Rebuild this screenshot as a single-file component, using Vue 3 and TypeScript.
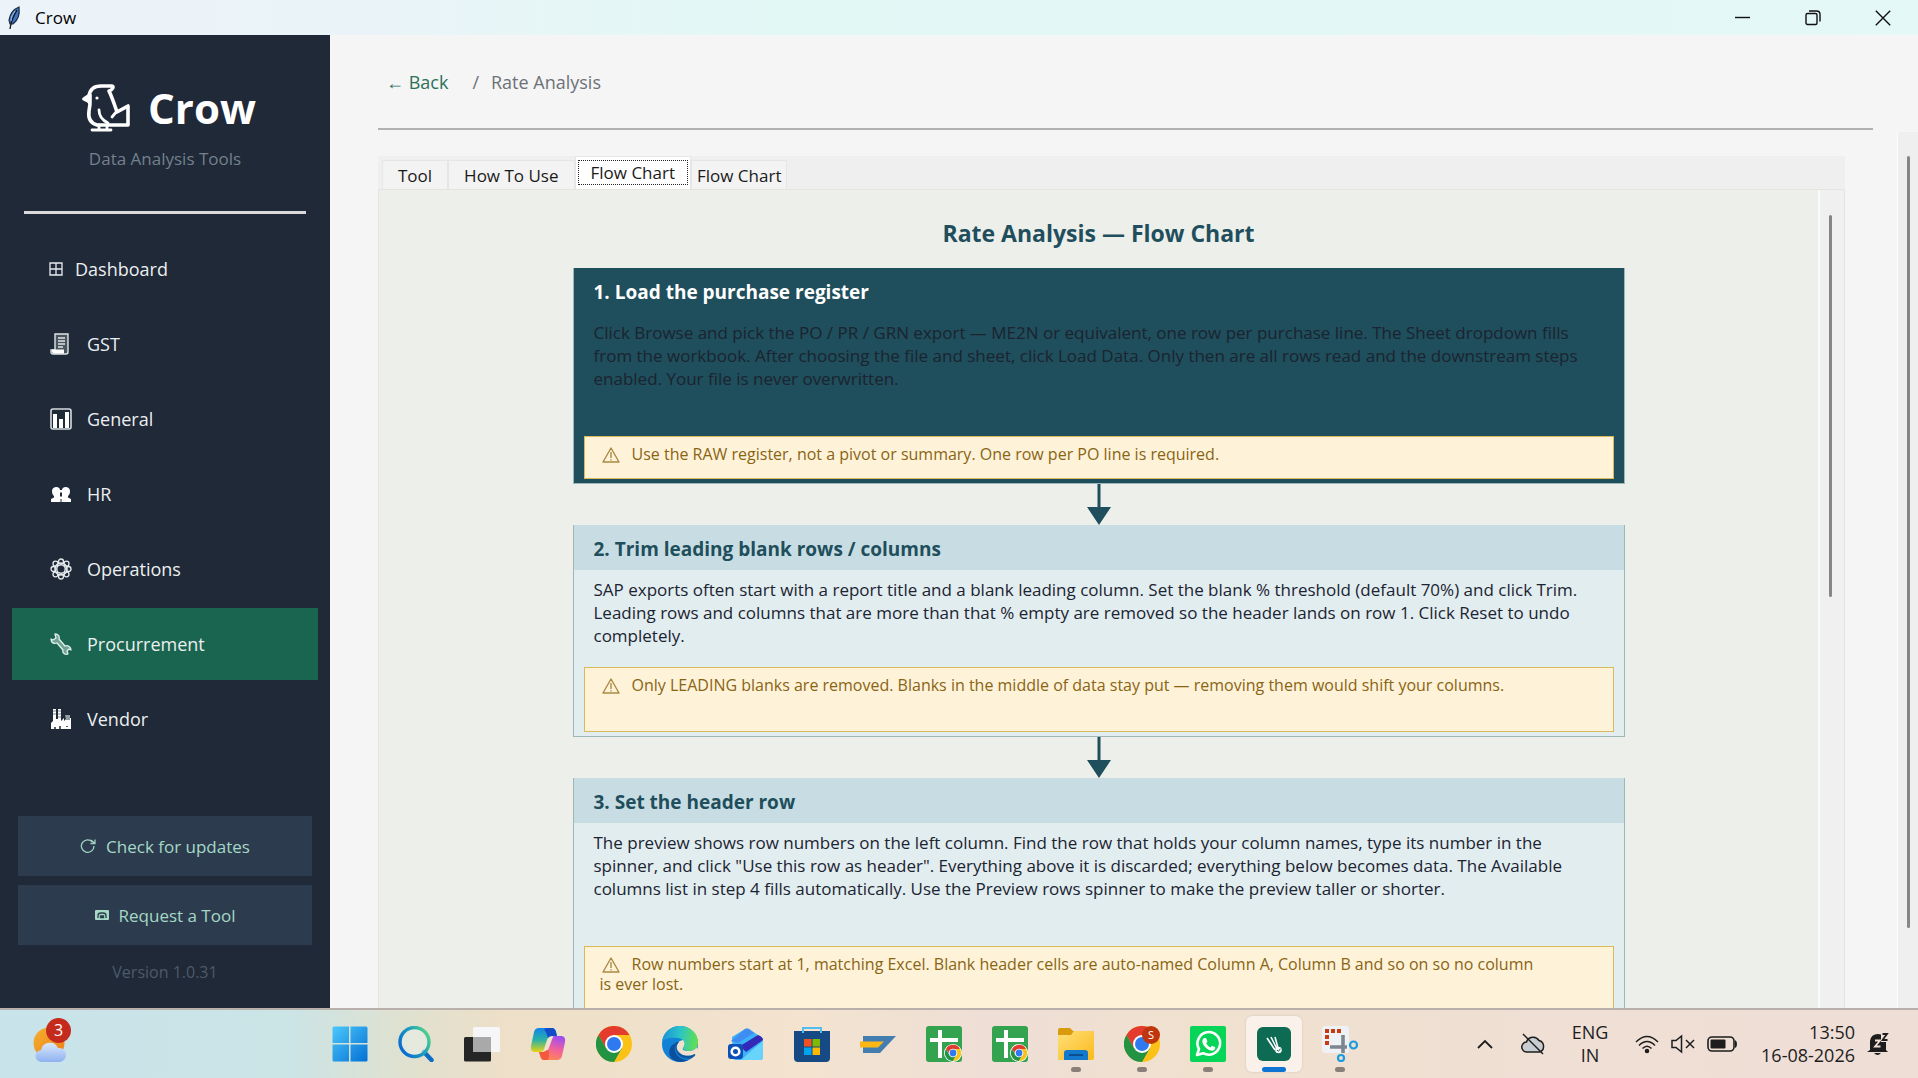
<script setup lang="ts">
import { ref } from 'vue'

interface NavItem { id: string; label: string }
interface Tab { id: string; label: string }
interface Step { title: string; body: string; warning: string; tone: 'dark' | 'light'; roomy: boolean; tallNote: boolean }
interface TaskApp { id: string; label: string; running: boolean }

const navItems: NavItem[] = [
  { id: 'dashboard', label: 'Dashboard' },
  { id: 'gst', label: 'GST' },
  { id: 'general', label: 'General' },
  { id: 'hr', label: 'HR' },
  { id: 'operations', label: 'Operations' },
  { id: 'procurement', label: 'Procurrement' },
  { id: 'vendor', label: 'Vendor' },
]
const activeNav = ref('procurement')

const tabs: Tab[] = [
  { id: 'tool', label: 'Tool' },
  { id: 'howto', label: 'How To Use' },
  { id: 'flow', label: 'Flow Chart' },
  { id: 'flow2', label: 'Flow Chart' },
]
const activeTab = ref('flow')

const steps: Step[] = [
  {
    title: '1. Load the purchase register',
    body: 'Click Browse and pick the PO / PR / GRN export — ME2N or equivalent, one row per purchase line. The Sheet dropdown fills\nfrom the workbook. After choosing the file and sheet, click Load Data. Only then are all rows read and the downstream steps\nenabled. Your file is never overwritten.',
    warning: 'Use the RAW register, not a pivot or summary. One row per PO line is required.',
    tone: 'dark', roomy: true, tallNote: false,
  },
  {
    title: '2. Trim leading blank rows / columns',
    body: 'SAP exports often start with a report title and a blank leading column. Set the blank % threshold (default 70%) and click Trim.\nLeading rows and columns that are more than that % empty are removed so the header lands on row 1. Click Reset to undo\ncompletely.',
    warning: 'Only LEADING blanks are removed. Blanks in the middle of data stay put — removing them would shift your columns.',
    tone: 'light', roomy: false, tallNote: true,
  },
  {
    title: '3. Set the header row',
    body: 'The preview shows row numbers on the left column. Find the row that holds your column names, type its number in the\nspinner, and click "Use this row as header". Everything above it is discarded; everything below becomes data. The Available\ncolumns list in step 4 fills automatically. Use the Preview rows spinner to make the preview taller or shorter.',
    warning: 'Row numbers start at 1, matching Excel. Blank header cells are auto-named Column A, Column B and so on so no column\nis ever lost.',
    tone: 'light', roomy: true, tallNote: true,
  },
]

const apps: TaskApp[] = [
  { id: 'start', label: 'Start', running: false },
  { id: 'search', label: 'Search', running: false },
  { id: 'taskview', label: 'Task View', running: false },
  { id: 'copilot', label: 'Copilot', running: false },
  { id: 'chrome', label: 'Chrome', running: false },
  { id: 'edge', label: 'Edge', running: false },
  { id: 'outlook', label: 'Outlook', running: false },
  { id: 'store', label: 'Store', running: false },
  { id: 'sap', label: 'SAP Logon', running: false },
  { id: 'sheets', label: 'Sheets', running: false },
  { id: 'sheets2', label: 'Sheets', running: false },
  { id: 'files', label: 'File Explorer', running: true },
  { id: 'chromes', label: 'Chrome profile', running: true },
  { id: 'whatsapp', label: 'WhatsApp', running: true },
  { id: 'crow', label: 'Crow', running: true },
  { id: 'snip', label: 'Snipping Tool', running: true },
]
</script>

<template>
  <div class="desktop">
    <header class="titlebar">
      <svg class="feather" viewBox="0 0 16 24" aria-hidden="true">
        <path d="M13 1C8 3 4 8 3 14l1 4 3 0C11 15 14 9 13 1Z" fill="#3f74bd" stroke="#1d2b40" stroke-width="1.2" />
        <path d="M11 4C8 9 5 15 4 23" fill="none" stroke="#0c1420" stroke-width="1.3" />
        <path d="M9 5C7 8 5 11 5 15" fill="none" stroke="#9cc3ee" stroke-width="1" />
      </svg>
      <span class="app-name">Crow</span>
      <button class="win-btn" aria-label="Minimize"><svg viewBox="0 0 16 16"><path d="M0 7.500h15" /></svg></button>
      <button class="win-btn" aria-label="Restore"><svg viewBox="0 0 16 16"><rect x="1" y="3.5" width="11" height="11" rx="1.5" /><path d="M4 1h7.500q3.500 0 3.500 3.500v7" /></svg></button>
      <button class="win-btn" aria-label="Close"><svg viewBox="0 0 16 16"><path d="M.8.8l14.400 14.400M15.200.8.8 15.200" /></svg></button>
    </header>

    <div class="workspace">
      <aside class="sidebar">
        <div class="brand">
          <svg class="bird" viewBox="0 0 48 48" aria-hidden="true" fill="none" stroke="#fff" stroke-width="3.600" stroke-linejoin="round" stroke-linecap="round">
            <path d="M7 12C8 5 13 2 19 2h11c2 0 1 4-3 5 3 6 5 12 8 21l11-6v19H15c-7-2-9-7-8-14l1-7-1-3Z" />
            <path d="M2 15l6-4v7Z" fill="#fff" />
            <path d="M17 26c0 6 3 10 9 13M35 27l-5 6M17 41v4M25 41v4M10 46h19" stroke-width="2.800" />
            <circle cx="15" cy="14" r=".8" fill="#fff" stroke-width="1.600" />
          </svg>
          <h1>Crow</h1>
        </div>
        <p class="tagline">Data Analysis Tools</p>
        <hr class="side-rule" />
        <nav class="nav">
          <button v-for="item in navItems" :key="item.id" class="nav-item" :class="{ active: item.id === activeNav, compact: item.id === 'dashboard' }" @click="activeNav = item.id">
            <svg v-if="item.id === 'dashboard'" class="nav-icon" viewBox="0 0 14 14" fill="none" stroke="#e8ecef" stroke-width="1.300"><path d="M1 1h12v12H1ZM7 1v12M1 7h12" /></svg>
            <svg v-else-if="item.id === 'gst'" class="nav-icon" viewBox="0 0 22 22"><path d="M5 1h13v18q0 2-2 2H3q-2 0-2-2v-2h4Z" fill="#4a555d" stroke="#dfe6e8" stroke-width="1.400" /><path d="M2 16.500h12v4H3q-1.500-1-1-4Z" fill="#fff" /><path d="M8 5h7M8 8h7M8 11h7M8 14h5" stroke="#dfe6e8" stroke-width="1.400" /></svg>
            <svg v-else-if="item.id === 'general'" class="nav-icon" viewBox="0 0 22 22"><rect x="1" y="1" width="20" height="20" rx="2" fill="#1f2a37" stroke="#d5dce0" stroke-width="1.600" /><path d="M3 6h4v14H3ZM9 11h4v9H9ZM15 4h4v16h-4Z" fill="#fff" /></svg>
            <svg v-else-if="item.id === 'hr'" class="nav-icon" viewBox="0 0 22 22" fill="#fff"><path d="M1 19v-3l3-1.500V13C3 12 2 11 2 8c0-5 8-5 8-1h2c0-4 8-4 8 1 0 3-1 4-2 5v1.500l3 1.500v3Z" /><path d="M10 10l1-1 1 1v3l-1 1-1-1ZM10.500 16h1v3h-1Z" fill="#1f2a37" /></svg>
            <svg v-else-if="item.id === 'operations'" class="nav-icon" viewBox="0 0 22 22" fill="none" stroke="#e6ebed" stroke-width="1.300"><circle cx="11" cy="11" r="4.200" /><circle cx="11" cy="11" r="6.200" /><circle cx="11" cy="3.500" r="2.500" /><circle cx="16.500" cy="5.700" r="2.500" /><circle cx="18.500" cy="11" r="2.500" /><circle cx="16.500" cy="16.300" r="2.500" /><circle cx="11" cy="18.500" r="2.500" /><circle cx="5.500" cy="16.300" r="2.500" /><circle cx="3.500" cy="11" r="2.500" /><circle cx="5.500" cy="5.700" r="2.500" /></svg>
            <svg v-else-if="item.id === 'procurement'" class="nav-icon" viewBox="0 0 22 22"><path d="M5 1l1 4-3 2-2-1c0 4 3 5 6 4l6 7c-1 3 2 5 5 4l-1-3 2-2 2 1c0-3-3-5-6-4L9 6c1-3-1-5-4-5Z" fill="#6fa592" stroke="#e4efeb" stroke-width="1.300" stroke-linejoin="round" /></svg>
            <svg v-else class="nav-icon" viewBox="0 0 22 22"><path d="M1 21V15l2-2V1h3v10h2V1h3v12l3-3v3l3-3h4v11Z" fill="#fff" /><path d="M3 3h3M3 6h3M8 3h3M8 6h3M8 9h3" stroke="#7d8790" stroke-width="1.200" /><path d="M15 7h5v5h-4Z" fill="#929ca3" /><path d="M5 21v-2M10 21v-3M17 18v1" stroke="#1f2a37" stroke-width="1.500" /></svg>
            <span>{{ item.label }}</span>
          </button>
        </nav>
        <div class="side-foot">
          <button class="foot-btn">
            <svg class="ic-16" viewBox="0 0 16 16" fill="none" stroke="#9fd3c0" stroke-width="1.300"><path d="M12.500 4A6.300 6.300 0 1 0 14 8M15 1.500v4h-4.500M15 5.500l-4-3.500" /></svg>
            <span>Check for updates</span>
          </button>
          <button class="foot-btn">
            <svg class="ic-14" viewBox="0 0 14 10"><rect width="14" height="10" rx="1" fill="#a5d8c6" /><path d="M3 8V5.500Q3 3 6 3h2q3 0 3 2.500V8M5.500 6v1.500h3V6Z" fill="none" stroke="#2c3c4e" stroke-width="1.300" /></svg>
            <span>Request a Tool</span>
          </button>
          <p class="version">Version 1.0.31</p>
        </div>
      </aside>

      <main class="content">
        <div class="crumbs">
          <a href="#back" class="back">← Back</a>
          <span class="slash">/</span>
          <span>Rate Analysis</span>
        </div>
        <div class="body-row">
          <section class="notebook">
            <div class="tabs" role="tablist">
              <button v-for="tab in tabs" :key="tab.id" role="tab" class="tab" :class="{ selected: tab.id === activeTab, last: tab.id === 'flow2' }" :aria-selected="tab.id === activeTab" @click="activeTab = tab.id"><span>{{ tab.label }}</span></button>
            </div>
            <div class="panel">
              <div class="canvas">
                <h2>Rate Analysis — Flow Chart</h2>
                <template v-for="(step, i) in steps" :key="step.title">
                  <svg v-if="i > 0" class="arrow" viewBox="0 0 24 41" aria-hidden="true"><path d="M10.500 0h3v23h10.500L12 41 0 23h10.500Z" fill="#1f4e5c" /></svg>
                  <article class="card" :class="step.tone">
                    <h3>{{ step.title }}</h3>
                    <p class="card-body" :class="{ roomy: step.roomy }">{{ step.body }}</p>
                    <p class="note" :class="{ tall: step.tallNote }"><svg class="warn" viewBox="0 0 18 16" fill="none" stroke="#a98a42" stroke-width="1.400" stroke-linejoin="round"><path d="M9 1l8 14H1ZM9 5v6M9 12.200v1.300" /></svg>{{ step.warning }}</p>
                  </article>
                </template>
              </div>
              <div class="scroll inner"><div class="thumb"></div></div>
            </div>
          </section>
          <div class="scroll outer"><div class="thumb"></div></div>
        </div>
      </main>
    </div>

    <footer class="taskbar">
      <button class="weather" aria-label="Weather">
        <svg viewBox="0 0 34 40">
          <defs>
            <linearGradient id="sun" x1="0" y1="0" x2="1" y2="1"><stop offset="0" stop-color="#f3b12f" /><stop offset="1" stop-color="#ef7d1b" /></linearGradient>
            <linearGradient id="cloud" x1="0" y1="0" x2="0" y2="1"><stop offset="0" stop-color="#dbe8fb" /><stop offset="1" stop-color="#8fb2f0" /></linearGradient>
          </defs>
          <circle cx="16" cy="19" r="15.500" fill="url(#sun)" />
          <path d="M9 38a6 6 0 0 1-1-12 9 9 0 0 1 17-2 7 7 0 0 1 2 14Z" fill="url(#cloud)" />
        </svg>
        <span class="badge">3</span>
      </button>

      <div class="apps">
        <button v-for="app in apps" :key="app.id" class="app" :class="{ running: app.running, current: app.id === 'crow' }" :aria-label="app.label">
          <svg v-if="app.id === 'start'" viewBox="0 0 36 36"><defs><linearGradient id="win" x1="0" y1="0" x2="1" y2="1"><stop offset="0" stop-color="#4cc8fb" /><stop offset="1" stop-color="#0370d4" /></linearGradient></defs><path d="M2 0.500h15v16.500H.5V2q0-1.500 1.500-1.500ZM18.500.5H34q1.500 0 1.500 1.500v15h-17ZM.5 18.500H17v17H2q-1.500 0-1.500-1.500ZM18.500 18.500h17V34q0 1.500-1.500 1.500H18.500Z" fill="url(#win)" /></svg>
          <svg v-else-if="app.id === 'search'" viewBox="0 0 36 36"><defs><linearGradient id="srch" x1="1" y1="0" x2="0" y2="0.600"><stop offset="0" stop-color="#5ee07a" /><stop offset="0.500" stop-color="#1fa0bd" /><stop offset="1" stop-color="#0a6fd0" /></linearGradient></defs><path d="M26 26l7.500 8" stroke="#0f6cc4" stroke-width="4.500" stroke-linecap="round" /><circle cx="16.500" cy="16" r="14.500" fill="#e8efe8" fill-opacity=".6" stroke="url(#srch)" stroke-width="3.400" /></svg>
          <svg v-else-if="app.id === 'taskview'" viewBox="0 0 36 36"><rect x="0" y="11" width="27" height="24.500" rx="1.500" fill="#252525" /><rect x="9" y="1" width="27" height="25" rx="1.500" fill="#f6f6f8" /><path d="M9 11h18v15H10.500Q9 26 9 24.500Z" fill="#a9a9a9" /></svg>
          <svg v-else-if="app.id === 'copilot'" viewBox="0 0 36 36"><defs><linearGradient id="cpa" x1="0" y1="0" x2="0" y2="1"><stop offset="0" stop-color="#1383e8" /><stop offset=".5" stop-color="#2bb2a5" /><stop offset="1" stop-color="#e8d412" /></linearGradient><linearGradient id="cpb" x1=".6" y1="0" x2=".3" y2="1"><stop offset="0" stop-color="#a04df0" /><stop offset=".5" stop-color="#f0619c" /><stop offset="1" stop-color="#ff8a4c" /></linearGradient></defs><path d="M9 2h13q3 0 4 4l1 4h-5q-4 0-5 4l-3 9q-1 3-4 3H4q-4-1-3-6L4 6q1-4 5-4Z" fill="url(#cpa)" /><path d="M17 2h5q3 0 4 4l1 4h-5q-3 0-4 2-1-5-4-9Z" fill="#134bc8" /><path d="M27 34H14q-3 0-4-5l-1-3h4q4 0 5-4l3-9q1-3 4-3h7q4 1 3 6l-3 14q-1 4-5 4Z" fill="url(#cpb)" /><path d="M18 34h-4q-3 0-4-5l-1-3h4q3 0 5-3 2 5 0 11Z" fill="#f4593d" /><path d="M20 11h3l-5 13h-3Z" fill="#f3e2cc" /></svg>
          <svg v-else-if="app.id === 'chrome' || app.id === 'chromes'" viewBox="0 0 36 36"><circle cx="18" cy="18" r="18" fill="#fbc116" /><path d="M18 18V9h15.600A18 18 0 0 0 2.400 9L10.200 22.500Z" fill="#e33b2e" /><path d="M2.400 9a18 18 0 0 0 15.600 27l7.800-13.500L18 18l-7.800 4.500Z" fill="#229342" /><circle cx="18" cy="18" r="9" fill="#fff" /><circle cx="18" cy="18" r="7" fill="#2f7af0" /><g v-if="app.id === 'chromes'"><circle cx="27" cy="9" r="9" fill="#bf360c" /><text x="27" y="13" font-size="11" text-anchor="middle" fill="#fff">S</text></g></svg>
          <svg v-else-if="app.id === 'edge'" viewBox="0 0 36 36"><defs><linearGradient id="eda" x1="0" y1=".3" x2="1" y2=".4"><stop offset="0" stop-color="#1a90d8" /><stop offset=".5" stop-color="#2cc4c8" /><stop offset="1" stop-color="#61e04e" /></linearGradient></defs><circle cx="18" cy="18" r="18" fill="#1182d6" /><path d="M0 16C1 6 9 0 18 0c10 0 18 7 18 16 0 6-4 9-9 9-4 0-6-1-6-3 3-4 1-10-6-10C8 11 2 13 0 16Z" fill="url(#eda)" /><path d="M14 17c-4 8 2 17 12 17l5-3C26 36 17 38 10 33 5 28 7 19 14 17Z" fill="#0c4f9c" /><path d="M21 14c-5 1-8 5-6 9 2 6 10 9 18 5l1 1 2-2-1-6c-3 4-6 4-9 4-4 0-6-1-5-3 2-3 2-6 0-8Z" fill="#f0e1ce" /><path d="M14 16c-3 8 3 19 16 16 2-1 4-3 3-4-8 4-15 1-18-4-1-3 0-6 2-8Z" fill="#0d559f" /></svg>
          <svg v-else-if="app.id === 'outlook'" viewBox="0 0 36 36"><path d="M4 11L17 3q2-1 4 0l12 8q2 1 2 4v16q0 3-3 3H8q-3 0-3-3Z" fill="#3cb1f7" /><path d="M3 15L17 3q2-1 4 0l5 4L10 17Z" fill="#3f8df2" /><path d="M12 20L30 9q5 2 5 5L18 26Z" fill="#3428b8" /><path d="M35 15v16q0 3-3 3H13l10-9Z" fill="#68d3fb" /><rect x="0" y="18" width="15" height="15" rx="3" fill="#0d4fb8" /><circle cx="7.500" cy="25.500" r="3.800" fill="none" stroke="#fff" stroke-width="2.600" /></svg>
          <svg v-else-if="app.id === 'store'" viewBox="0 0 36 36"><path d="M0 5h36v27q0 4-4 4H4q-4 0-4-4Z" fill="#154a85" /><path d="M9 7V2h18v5" fill="none" stroke="#54bdf0" stroke-width="2" /><path d="M10 13h7.500v7.500H10Z" fill="#f25022" /><path d="M18.500 13H26v7.500h-7.500Z" fill="#7fba00" /><path d="M10 21.500h7.500V29H10Z" fill="#00a4ef" /><path d="M18.500 21.500H26V29h-7.500Z" fill="#ffb900" /></svg>
          <svg v-else-if="app.id === 'sap'" viewBox="0 0 36 36"><path d="M3 10h33L20 27H3Z" fill="#447db0" /><path d="M0 15.500h24L18 21.500H0Z" fill="#fdb714" /></svg>
          <svg v-else-if="app.id === 'sheets' || app.id === 'sheets2'" viewBox="0 0 36 36"><rect width="36" height="36" rx="3" fill="#34a34f" /><path d="M12 4h4v8h16v4H16v16h-4V16H4v-4h8Z" fill="#fff" /><circle cx="27" cy="27" r="9" fill="#fff" /><path d="M27 27v-4h7A8 8 0 0 0 20 23l4 6Z" fill="#e33b2e" /><path d="M20 23a8 8 0 0 0 7 12l3.500-6L27 27l-3.500 2Z" fill="#229342" /><path d="M27 35a8 8 0 0 0 7-12h-7l3.500 6Z" fill="#fbc116" /><circle cx="27" cy="27" r="4.300" fill="#fff" /><circle cx="27" cy="27" r="3.400" fill="#2f7af0" /></svg>
          <svg v-else-if="app.id === 'files'" viewBox="0 0 36 36"><defs><linearGradient id="fld" x1="0" y1="0" x2="1" y2="1"><stop offset="0" stop-color="#ffe07a" /><stop offset="1" stop-color="#fbb91b" /></linearGradient></defs><path d="M0 4q0-2 2-2h10l3 3h19q2 0 2 2v10H0Z" fill="#d99a0b" /><path d="M0 9h13l3-4h18q2 0 2 2v25q0 2-2 2H0Z" fill="url(#fld)" /><path d="M6 34v-7q0-3 3-3h18q3 0 3 3v7Z" fill="#1379cc" /><path d="M11 29h14" stroke="#0b4f90" stroke-width="2" /></svg>
          <svg v-else-if="app.id === 'whatsapp'" viewBox="0 0 36 36"><rect width="36" height="36" rx="2" fill="#07d558" /><path d="M7 29l2-6a11.300 11.300 0 1 1 4.200 4.200Z" fill="none" stroke="#fff" stroke-width="2.600" stroke-linejoin="round" /><path d="M14 12l2 0 1.500 3.500-1.300 1.700q1.500 3 4.300 4.200l1.500-1.700 3.300 1.600q0 3-3 3.400c-4 0-9.800-5-10-9.500q0-2 1.700-3.200Z" fill="#fff" /></svg>
          <svg v-else-if="app.id === 'crow'" viewBox="0 0 36 36"><rect x="1" y="1" width="34" height="34" rx="6" fill="#0c6b52" /><path d="M11 12l8 12M15 11l6 12M19 11l3 11" stroke="#fff" stroke-width="1.600" /><circle cx="22.500" cy="24" r="3.300" fill="#fff" /><path d="M21 24l1.500 1.200 2-2.500" stroke="#0c6b52" fill="none" /></svg>
          <svg v-else viewBox="0 0 36 36"><rect width="27" height="27" rx="3" fill="#eef2f6" /><path d="M3 3h4v4H3ZM9 3h4v4H9ZM15 3h4v4h-4ZM3 9h4v4H3ZM3 15h4v4H3Z" fill="#c93a12" /><path d="M8 21h17M21 9v18" stroke="#7d868e" stroke-width="3.600" /><circle cx="31.500" cy="19" r="3.500" fill="none" stroke="#1c9be0" stroke-width="2.200" /><circle cx="19" cy="32" r="3" fill="none" stroke="#1c9be0" stroke-width="2.200" /></svg>
        </button>
      </div>

      <div class="tray">
        <button class="tray-btn chevron" aria-label="Hidden icons"><svg viewBox="0 0 16 10" fill="none" stroke="#1d1d1d" stroke-width="1.800"><path d="M1 9l7-7 7 7" /></svg></button>
        <button class="tray-btn cloud" aria-label="OneDrive"><svg viewBox="0 0 24 22" fill="none" stroke="#1d1d1d" stroke-width="1.500"><path d="M6 19a5 5 0 0 1-.5-10A7 7 0 0 1 18 7.500 6 6 0 0 1 18.500 19Z" fill="#c9ccd1" /><path d="M2 1l20 20" /></svg></button>
        <button class="tray-btn lang"><span>ENG</span><span>IN</span></button>
        <button class="tray-btn status" aria-label="Network, sound and battery">
          <svg class="wifi" viewBox="0 0 24 20" fill="none" stroke="#1d1d1d" stroke-width="1.500"><path d="M1 8Q12-3 23 8M4 11.500q8-8 16 0M7.500 14.500q4.500-4.500 9 0" /><circle cx="12" cy="17" r="1.500" fill="#1d1d1d" /></svg>
          <svg class="sound" viewBox="0 0 24 20" fill="none" stroke="#1d1d1d" stroke-width="1.500"><path d="M1 6.500h4L10.500 2v16L5 13.500H1ZM15 6l8 8M23 6l-8 8" /></svg>
          <svg class="battery" viewBox="0 0 30 16"><rect x="1" y="1" width="26" height="14" rx="4" fill="none" stroke="#1d1d1d" stroke-width="1.600" /><rect x="3.500" y="3.500" width="15" height="9" rx="1" fill="#1d1d1d" /><path d="M28 4q2 1 2 4t-2 4Z" fill="#1d1d1d" /></svg>
        </button>
        <button class="tray-btn clock"><span>13:50</span><span>16-08-2026</span></button>
        <button class="tray-btn bell" aria-label="Notifications">
          <svg viewBox="0 0 22 24"><path d="M3 18V9q1-7 8-7t8 7v9l2 2H0Z" fill="#1d1d1d" /><path d="M7 21h7q-3.500 4-7 0Z" fill="#1d1d1d" /><path d="M14 0h8v10h-8Z" fill="#efdfd6" /><path d="M15.500 2h4.500l-4.500 6h5" fill="none" stroke="#1d1d1d" stroke-width="1.800" /><path d="M8 8.500h5l-5 6h5.500" fill="none" stroke="#f0e0d6" stroke-width="1.800" /></svg>
        </button>
      </div>
    </footer>
  </div>
</template>

<style>
body { margin: 0; overflow: hidden; }
</style>

<style scoped>
.desktop {
  display: flex;
  flex-direction: column;
  height: 100vh;
  font-family: "Open Sans", "Noto Sans", sans-serif;
  color: #1b1b1b;
}
button {
  margin: 0;
  padding: 0;
  border: 0;
  background: none;
  font: inherit;
  color: inherit;
}
h1, h2, h3, p { margin: 0; }
svg { display: block; flex: none; }

.titlebar {
  display: flex;
  align-items: center;
  height: 35px;
  padding-left: 6px;
  background: linear-gradient(90deg, #ecf3f9 0%, #eaf4f8 20%, #e2f8f5 40%, #e3f8f7 100%);
  flex: none;
}
.feather { width: 16px; height: 24px; }
.app-name { flex: 1; margin-left: 13px; font-size: 17px; color: #000; }
.win-btn { display: flex; align-items: center; justify-content: center; width: 70px; height: 35px; }
.win-btn svg { width: 16px; height: 16px; fill: none; stroke: #111; stroke-width: 1.4; }

.workspace { display: flex; flex: 1; min-height: 0; }

.sidebar {
  display: flex;
  flex-direction: column;
  width: 330px;
  flex: none;
  background: #1f2937;
}
.brand { display: flex; align-items: center; justify-content: center; gap: 18px; padding: 44px 0 0 8px; height: 58px; }
.bird { width: 48px; height: 48px; }
.brand h1 { font-size: 42px; line-height: 58px; font-weight: 700; color: #fff; }
.tagline { margin-top: 10px; line-height: 24px; font-size: 17px; text-align: center; color: #74808e; }
.side-rule { margin: 40px 24px 19px; height: 3px; border: 0; background: #dcd9dc; flex: none; }
.nav { display: flex; flex-direction: column; gap: 3px; padding: 0 12px; }
.nav-item { display: flex; align-items: center; gap: 15px; height: 72px; padding-left: 38px; font-size: 18px; color: #eceff1; text-align: left; }
.nav-icon { width: 22px; height: 22px; }
.compact { gap: 12px; padding-left: 37px; }
.compact .nav-icon { width: 14px; height: 14px; }
.active { background: #1a654f; }
.side-foot { display: flex; flex-direction: column; gap: 9px; margin-top: auto; padding: 0 18px 24px; }
.foot-btn { display: flex; align-items: center; justify-content: center; gap: 10px; height: 60px; font-size: 17px; background: #2c3c4e; color: #a5d8c6; }
.ic-16 { width: 16px; height: 16px; }
.ic-14 { width: 14px; height: 10px; }
.version { margin-top: 6px; text-align: center; font-size: 16px; line-height: 24px; color: #4d5a69; }

.content { display: flex; flex-direction: column; flex: 1; min-width: 0; background: #f5f5f5; }
.crumbs { display: flex; align-items: center; height: 93px; margin: 0 45px 0 48px; padding-left: 8px; border-bottom: 2px solid #b1b1b1; font-size: 18px; color: #6c7278; flex: none; }
.back { color: #2c715a; text-decoration: none; }
.slash { margin: 0 12px 0 24px; }
.body-row { display: flex; flex: 1; min-height: 0; padding-left: 48px; }
.notebook { display: flex; flex-direction: column; flex: 1; min-width: 0; margin: 26px 52px 0 0; }
.tabs { display: flex; align-items: flex-end; height: 33px; padding-left: 4px; background: #efefef; flex: none; }
.tab { height: 29px; padding: 0 15px; font-size: 17px; line-height: 27px; background: #f3f3f3; border: 1px solid #e6e6e6; border-bottom: 0; color: #1a1a1a; white-space: nowrap; }
.tab.last { padding: 0 5px; }
.tab.selected { align-self: stretch; height: 33px; padding: 2px 2px 3px; background: #fff; line-height: 24px; }
.tab.selected span { display: block; height: 25px; padding: 0 12px; border: 1px dotted #222; box-sizing: border-box; }
.panel { display: flex; flex: 1; min-height: 0; border: 1px solid #e4e5e3; border-bottom: 0; background: #edefeb; }
.canvas { display: flex; flex-direction: column; align-items: center; flex: 1; min-width: 0; overflow: hidden; padding: 26px 0 0; }
h2 { font-size: 23px; line-height: 34px; font-weight: 700; color: #1f4e5c; margin-bottom: 18px; }
.arrow { width: 24px; height: 41px; }
.card { width: 100%; max-width: 1052px; box-sizing: border-box; flex: none; padding-bottom: 4px; border: 1px solid #9db7b7; border-top: 0; background: #e2edf0; }
.card h3 { height: 45px; padding-left: 20px; line-height: 48px; font-size: 19px; font-weight: 700; background: #c7dde3; color: #1f4e5c; }
.card-body { min-height: 89px; padding: 8px 20px 0; font-size: 17px; line-height: 23px; white-space: pre-line; color: #1b2430; }
.card-body.roomy { min-height: 115px; }
.note { min-height: 34px; margin: 0 10px; padding: 7px 15px 0; border: 1px solid #d9b95a; background: #fef3d9; font-size: 16px; line-height: 20px; white-space: pre-line; color: #8a6413; }
.note.tall { min-height: 56px; }
.warn { display: inline-block; width: 18px; height: 16px; margin: 0 12px 0 2px; vertical-align: -3px; }
.dark, .dark h3 { background: #1f4e5c; }
.dark h3 { color: #fff; }
.scroll { display: flex; justify-content: center; flex: none; }
.inner { width: 20px; border-left: 2px solid #fafafa; background: #f0f0f0; padding: 25px 4px 0 0; }
.outer { width: 20px; margin-top: 2px; padding-top: 24px; border-left: 1px solid #fcfcfc; background: #efefef; }
.thumb { width: 3px; background: #868686; border-radius: 2px; }
.inner .thumb { height: 382px; }
.outer .thumb { height: 772px; }

.taskbar {
  display: flex;
  align-items: center;
  height: 68px;
  flex: none;
  border-top: 2px solid #b9b0ac;
  background: linear-gradient(90deg, #c8e3ea 0%, #cbe4e6 15%, #dfe1d0 21%, #eddfc8 26%, #f3e3cf 42%, #eeded6 52%, #f0e1cf 62%, #efdfd4 80%, #eeded6 100%);
}
.weather { position: relative; width: 34px; height: 40px; margin-left: 33px; }
.weather svg { width: 34px; height: 40px; }
.badge { position: absolute; left: 13px; top: -6px; width: 25px; height: 25px; border-radius: 50%; background: #c42b1c; color: #fff; font-size: 16px; line-height: 25px; text-align: center; }
.apps { display: flex; flex: 1; gap: 10px; margin-left: 255px; }
.app { position: relative; display: flex; align-items: center; justify-content: center; width: 56px; height: 56px; border-radius: 6px; }
.app svg { width: 36px; height: 36px; }
.running::after { content: ""; position: absolute; left: 50%; bottom: 0; width: 10px; height: 5px; margin-left: -5px; border-radius: 3px; background: #8a7f78; }
.current { background: #f9f1ea; box-shadow: 0 0 2px #c9bcb2; }
.current::after { width: 24px; margin-left: -12px; background: #0f73d2; }
.tray { display: flex; align-items: center; color: #1d1d1d; font-size: 18px; line-height: 23px; }
.chevron svg { width: 16px; height: 10px; }
.cloud { margin-left: 28px; }
.cloud svg { width: 24px; height: 22px; }
.lang, .clock { display: flex; flex-direction: column; }
.lang { width: 36px; margin-left: 27px; align-items: center; }
.status { display: flex; align-items: center; gap: 12px; margin-left: 27px; }
.wifi, .sound { width: 24px; height: 20px; }
.battery { width: 30px; height: 16px; }
.clock { align-items: flex-end; width: 94px; margin-left: 24px; }
.bell { margin: 0 29px 0 12px; }
.bell svg { width: 22px; height: 24px; }
</style>
